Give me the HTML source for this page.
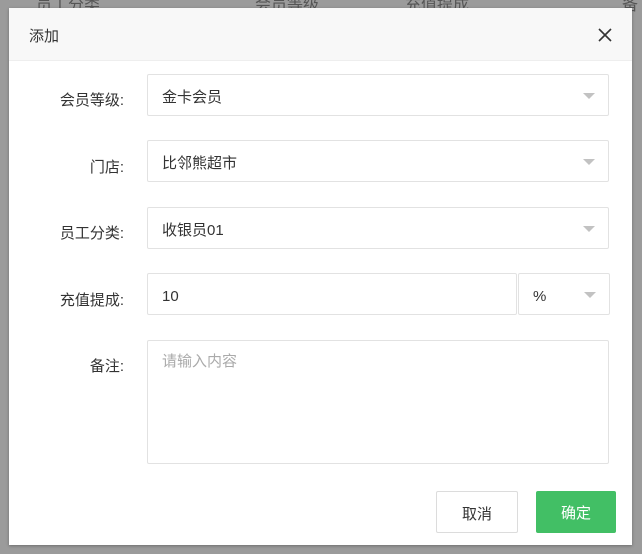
<!DOCTYPE html>
<html><head><meta charset="utf-8"><style>
*{box-sizing:border-box}
body{margin:0;width:642px;height:554px;background:#9b9b9b;font-family:"Liberation Sans","Noto Sans CJK SC",sans-serif;position:relative;overflow:hidden;font-size:15px;color:#333}
.bg{position:absolute;top:-9px;left:0;width:642px;height:20px;color:#555;font-size:16px}
.bg span{position:absolute;top:0}
.dlg{position:absolute;left:9px;top:8px;width:623px;height:537px;background:#fff;box-shadow:0 1px 3px rgba(0,0,0,.3)}
.hd{height:53px;background:#f8f8f8;border-bottom:1px solid #eee;position:relative}
.hd .t{position:absolute;left:20px;top:17px;font-size:15px}
.hd svg{position:absolute;right:20px;top:20px}
.lb{position:absolute;right:508px;font-size:15px;text-align:right;white-space:nowrap}
.in{position:absolute;left:138px;width:462px;height:42px;border:1px solid #e2e2e2;border-radius:2px;padding:0 14px;line-height:46px;font-size:15px;overflow:hidden}
.ar{position:absolute;right:13px;top:18px;width:0;height:0;border-left:6px solid transparent;border-right:6px solid transparent;border-top:6px solid #c2c2c2}
.btn{position:absolute;top:483px;height:42px;line-height:46px;text-align:center;border-radius:2px;font-size:15px}
</style></head><body>
<div class="bg"><span style="left:36px">员工分类</span><span style="left:255px">会员等级</span><span style="left:405px">充值提成</span><span style="left:622px">备</span></div>
<div class="dlg">
<div class="hd"><span class="t">添加</span><svg width="14" height="14" viewBox="0 0 14 14"><path d="M1 1L13 13M13 1L1 13" stroke="#333" stroke-width="1.6"/></svg></div>
<div class="lb" style="top:81px">会员等级:</div>
<div class="in" style="top:66px">金卡会员<i class="ar"></i></div>
<div class="lb" style="top:148px">门店:</div>
<div class="in" style="top:132px">比邻熊超市<i class="ar"></i></div>
<div class="lb" style="top:214px">员工分类:</div>
<div class="in" style="top:199px">收银员01<i class="ar"></i></div>
<div class="lb" style="top:281px">充值提成:</div>
<div class="in" style="top:265px;width:370px">10</div>
<div class="in" style="top:265px;left:509px;width:92px">%<i class="ar"></i></div>
<div class="lb" style="top:347px">备注:</div>
<div class="in" style="top:332px;height:124px;color:#aaa;line-height:20px;padding-top:11px">请输入内容</div>
<div class="btn" style="left:427px;width:82px;border:1px solid #dcdcdc;color:#333">取消</div>
<div class="btn" style="left:527px;width:80px;background:#42bf65;color:#fff">确定</div>
</div>
</body></html>
